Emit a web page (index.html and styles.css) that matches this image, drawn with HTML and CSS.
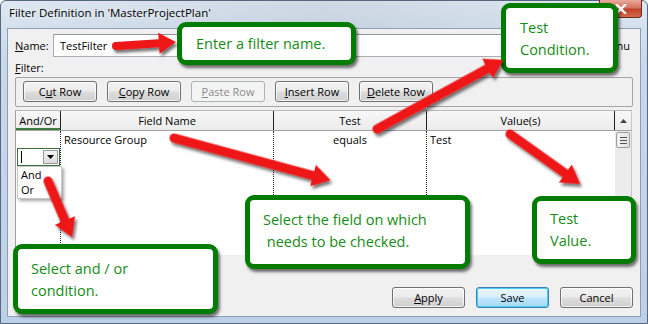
FILE: index.html
```html
<!DOCTYPE html>
<html>
<head>
<meta charset="utf-8">
<link rel="stylesheet" href="styles.css">
</head>
<body>
<div class="window">
  <div class="titlebar">
    <span class="title">Filter Definition in 'MasterProjectPlan'</span>
    <div class="close"><svg width="12" height="10" viewBox="0 0 12 10"><path d="M2 1 L10 9 M10 1 L2 9" stroke="#fff" stroke-width="2.4" stroke-linecap="square"/></svg></div>
  </div>
  <div class="client">
    <div class="name-row">
      <span class="lbl"><u>N</u>ame:</span>
      <div class="input">TestFilter</div>
      <span class="chk"><span class="box"></span>Show in <u>m</u>enu</span>
    </div>
    <div class="filter-lbl"><u>F</u>ilter:</div>
    <div class="toolbar">
      <div class="btn">C<u>u</u>t Row</div>
      <div class="btn"><u>C</u>opy Row</div>
      <div class="btn disabled"><u>P</u>aste Row</div>
      <div class="btn"><u>I</u>nsert Row</div>
      <div class="btn"><u>D</u>elete Row</div>
    </div>
    <div class="grid">
      <div class="gmain">
        <div class="ghead">
          <div class="hc active">And/Or</div>
          <div class="hc">Field Name</div>
          <div class="hc">Test</div>
          <div class="hc">Value(s)</div>
        </div>
        <div class="gbody">
          <div class="col c1">
            <div class="cell"></div>
            <div class="editor">
              <span class="caret"></span>
              <span class="ddbtn"><svg width="7" height="4" viewBox="0 0 7 4"><path d="M0 0 H7 L3.5 4 Z" fill="#000"/></svg></span>
              <div class="ddlist">
                <div class="dditem">And</div>
                <div class="dditem">Or</div>
              </div>
            </div>
          </div>
          <div class="col c2"><div class="cell">Resource Group</div></div>
          <div class="col c3"><div class="cell center">equals</div></div>
          <div class="col c4"><div class="cell">Test</div></div>
        </div>
      </div>
      <div class="vscroll">
        <div class="vs-head"><svg width="7" height="4" viewBox="0 0 7 4"><path d="M0 4 H7 L3.5 0 Z" fill="#444"/></svg></div>
        <div class="thumb"><span></span><span></span><span></span></div>
      </div>
    </div>
    <div class="footer">
      <div class="btn wide"><u>A</u>pply</div>
      <div class="btn wide default">Save</div>
      <div class="btn wide">Cancel</div>
    </div>
  </div>

  <div class="callout co1"><p>Enter a filter name.</p></div>
  <div class="callout co2"><p>Test<br>Condition.</p></div>
  <div class="callout co3"><p>Select the field on which<br>&nbsp;needs to be checked.</p></div>
  <div class="callout co4"><p>Test<br>Value.</p></div>
  <div class="callout co5"><p>Select and / or<br>condition.</p></div>

  <svg class="arrows" width="648" height="324" viewBox="0 0 648 324">
    <defs>
      <filter id="sh" x="-20%" y="-20%" width="140%" height="140%">
        <feDropShadow dx="2" dy="3" stdDeviation="1.8" flood-color="#000" flood-opacity="0.55"/>
      </filter>
    </defs>
    <g fill="#ee1515" filter="url(#sh)">
      <g transform="translate(116 46) rotate(-3.8)"><path d="M0 -4 L43 -4 L43 -10.5 L60 0 L43 10.5 L43 4 L0 4 A4 4 0 0 1 0 -4 Z"/></g>
      <g transform="translate(377 129) rotate(-28.7)"><path d="M0 -4.5 L126 -4.5 L126 -11 L144 0 L126 11 L126 4.5 L0 4.5 A4.5 4.5 0 0 1 0 -4.5 Z"/></g>
      <g transform="translate(174 138) rotate(15.1)"><path d="M0 -4.5 L144 -4.5 L144 -11 L162 0 L144 11 L144 4.5 L0 4.5 A4.5 4.5 0 0 1 0 -4.5 Z"/></g>
      <g transform="translate(510 134) rotate(35.5)"><path d="M0 -4.5 L68 -4.5 L68 -11 L86 0 L68 11 L68 4.5 L0 4.5 A4.5 4.5 0 0 1 0 -4.5 Z"/></g>
      <g transform="translate(48 181) rotate(66.8)"><path d="M0 -4.5 L43 -4.5 L43 -11 L61 0 L43 11 L43 4.5 L0 4.5 A4.5 4.5 0 0 1 0 -4.5 Z"/></g>
    </g>
  </svg>
</div>
</body>
</html>
```

FILE: styles.css
```css
* { box-sizing: border-box; }
html, body { margin: 0; padding: 0; }
body {
  width: 648px;
  height: 324px;
  overflow: hidden;
  font-family: "Open Sans", "Noto Sans", sans-serif;
  font-size: 11px;
  color: #000;
  background: #fff;
}
u { text-decoration: underline; text-underline-offset: 1px; }

.window {
  position: relative;
  width: 648px;
  height: 324px;
  border: 1px solid #56687d;
  border-radius: 6px 6px 0 0;
  background: linear-gradient(180deg, #dfe8f2 0%, #c9d9eb 18%, #bcd0e7 100%);
  display: flex;
  flex-direction: column;
}
.titlebar {
  position: relative;
  height: 27px;
  flex: none;
  padding-left: 8px;
  display: flex;
  align-items: center;
  background: linear-gradient(90deg, rgba(255,255,255,0) 0%, rgba(160,170,185,0.25) 50%, rgba(255,255,255,0) 100%);
}
.title {
  font-size: 11.5px;
  color: #000;
  margin-top: -4px;
  text-shadow: 0 0 6px rgba(255,255,255,0.9);
}
.close {
  position: absolute;
  right: 5px;
  top: -1px;
  width: 43px;
  height: 18px;
  border: 1px solid #6b2a22;
  border-top: none;
  border-radius: 0 0 4px 4px;
  background: linear-gradient(180deg, #e9a99b 0%, #d6745f 45%, #c0402a 55%, #d66a4d 100%);
  display: flex;
  align-items: center;
  justify-content: center;
}

.client {
  flex: 1;
  margin: 0 6px 6px 6px;
  border: 1px solid #8e9fb4;
  background: #f0f0f0;
  padding: 0 7px;
  display: flex;
  flex-direction: column;
}

.name-row {
  margin-top: 5px;
  height: 23px;
  display: flex;
  align-items: center;
}
.lbl { width: 38px; flex: none; }
.input {
  flex: 1;
  height: 23px;
  border: 1px solid #abadb3;
  border-top-color: #8f949c;
  background: #fff;
  padding-left: 6px;
  display: flex;
  align-items: center;
}
.chk {
  flex: none;
  margin-left: 8px;
  margin-right: 3px;
  display: flex;
  align-items: center;
  gap: 4px;
}
.box {
  width: 13px; height: 13px;
  border: 1px solid #8f8f8f;
  background: #f4f4f4;
}
.filter-lbl {
  margin-top: 3px;
  height: 15px;
  line-height: 15px;
}

.toolbar {
  margin-top: 2px;
  height: 30px;
  border: 1px solid #a6a6a6;
  border-radius: 2px;
  padding: 3px 7px;
  display: flex;
  gap: 10px;
  align-items: flex-start;
}
.btn {
  width: 74px;
  height: 21px;
  border: 1px solid #707070;
  border-radius: 3px;
  background: linear-gradient(180deg, #f2f2f2 0%, #ebebeb 48%, #dddddd 52%, #cfcfcf 100%);
  box-shadow: inset 0 0 0 1px rgba(255,255,255,0.75);
  display: flex;
  align-items: center;
  justify-content: center;
  line-height: 1;
  white-space: nowrap;
}
.btn.disabled {
  border-color: #adb2b5;
  background: #f4f4f4;
  color: #8a8a8a;
  box-shadow: none;
}
.btn.default {
  border-color: #3c7fb1;
  background: linear-gradient(180deg, #eaf6fd 0%, #d9f0fc 48%, #bee6fd 52%, #a7d9f5 100%);
  box-shadow: inset 0 0 0 1px #48d0f8;
}
.btn.wide { width: 73px; }

.grid {
  margin-top: 3px;
  margin-right: 1px;
  height: 145px;
  display: flex;
  border-left: 1px solid #a0a0a0;
  border-top: 1px solid #b9b9b9;
}
.gmain {
  flex: 1;
  display: flex;
  flex-direction: column;
}
.ghead {
  height: 20px;
  display: grid;
  grid-template-columns: 45px 213px 153px 1fr;
  background: linear-gradient(180deg, #f7f7f7, #ececec);
  border-bottom: 1px solid #a0a0a0;
}
.hc {
  display: flex;
  align-items: center;
  justify-content: center;
  border-right: 1px solid #222;
  line-height: 1;
}
.hc.active { box-shadow: inset 0 -2px 0 #3f7a3f; }
.gbody {
  flex: 1;
  display: grid;
  grid-template-columns: 45px 213px 153px 1fr;
  background: #fff;
}
.col {
  display: flex;
  flex-direction: column;
}
.c1, .c2, .c3 { border-right: 1px dotted #222; }
.cell {
  height: 17px;
  padding-left: 3px;
  display: flex;
  align-items: center;
  white-space: nowrap;
}
.cell.center { justify-content: center; padding-left: 0; }

.editor {
  position: relative;
  height: 18px;
  margin-left: 1px;
  border: 1px solid #3d6f3d;
  background: #fff;
  display: flex;
  align-items: center;
}
.caret {
  width: 1px;
  height: 12px;
  background: #000;
  margin-left: 3px;
}
.ddbtn {
  margin-left: auto;
  margin-right: 1px;
  width: 15px;
  height: 14px;
  border: 1px solid #9a9a9a;
  background: linear-gradient(180deg, #f4f4f4, #dcdcdc);
  display: flex;
  align-items: center;
  justify-content: center;
}
.ddlist {
  position: absolute;
  left: -1px;
  top: 17px;
  width: 45px;
  height: 33px;
  background: #fff;
  border: 1px solid #c8c8c8;
  box-shadow: 2px 2px 3px rgba(0,0,0,0.35);
  padding-top: 0;
  z-index: 2;
}
.dditem {
  height: 15px;
  line-height: 15px;
  padding-left: 3px;
}

.vscroll {
  width: 17px;
  flex: none;
  background: #ececec;
  display: flex;
  flex-direction: column;
  align-items: center;
  border-right: 1px solid #c8c8c8;
}
.vs-head {
  height: 20px;
  width: 100%;
  display: flex;
  align-items: center;
  justify-content: center;
  border-bottom: 1px solid #a0a0a0;
  background: linear-gradient(180deg, #f7f7f7, #ececec);
}
.thumb {
  margin-top: 1px;
  width: 14px;
  height: 16px;
  border: 1px solid #9c9c9c;
  border-radius: 2px;
  background: linear-gradient(90deg, #f3f3f3, #e2e2e2);
  display: flex;
  flex-direction: column;
  align-items: center;
  justify-content: center;
  gap: 2px;
}
.thumb span {
  width: 7px;
  height: 1px;
  background: #555;
}

.footer {
  margin-top: auto;
  padding-bottom: 8px;
  display: flex;
  justify-content: flex-end;
  gap: 11px;
}

.callout {
  position: absolute;
  border: 5px solid #007c00;
  border-radius: 9px;
  background: #fff;
  box-shadow: 2px 3px 3px rgba(0,0,0,0.55);
  color: #168c16;
  font-family: "Open Sans", "Noto Sans", sans-serif;
  font-size: 14.5px;
  line-height: 22px;
  z-index: 3;
}
.callout p { margin: 0; white-space: nowrap; }
.co1 { left: 176px; top: 21px; width: 179px; height: 43px; padding: 6px 0 0 14px; }
.co2 { left: 500px; top: 2px; width: 117px; height: 70px; padding: 9px 0 0 14px; }
.co3 { left: 244px; top: 194px; width: 225px; height: 74px; padding: 9px 0 0 13px; }
.co4 { left: 531px; top: 195px; width: 104px; height: 68px; padding: 7px 0 0 13px; }
.co5 { left: 12px; top: 243px; width: 205px; height: 70px; padding: 9px 0 0 13px; }

.arrows {
  position: absolute;
  left: -1px;
  top: -1px;
  z-index: 4;
  pointer-events: none;
}
```
